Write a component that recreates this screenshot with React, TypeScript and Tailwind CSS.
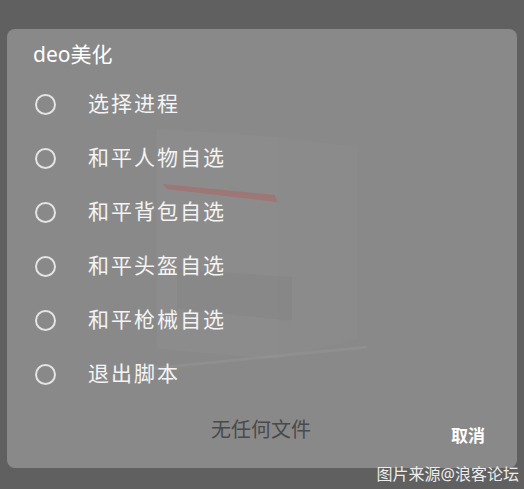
const options = [
  "选择进程",
  "和平人物自选",
  "和平背包自选",
  "和平头盔自选",
  "和平枪械自选",
  "退出脚本",
];

const cjk = { fontFamily: '"Noto Sans", "Noto Sans CJK SC", sans-serif' };

function Backdrop() {
  // faint picture that shows through the dialog
  return (
    <svg
      className="pointer-events-none absolute inset-0"
      width="510"
      height="439"
      viewBox="0 0 510 439"
    >
      <polygon points="150,100 270,108 270,330 150,320" fill="#ffffff" opacity="0.03" />
      <polygon points="270,108 350,118 350,310 270,330" fill="#ffffff" opacity="0.02" />
      <polygon points="156,155 268,166 270,173 160,160" fill="#b06060" opacity="0.5" />
      <polygon points="170,240 285,248 285,292 170,280" fill="#000000" opacity="0.025" />
      <line x1="140" y1="340" x2="360" y2="318" stroke="#ffffff" strokeOpacity="0.05" strokeWidth="3" />
    </svg>
  );
}

export default function App() {
  return (
    <div className="relative h-[489px] w-[524px] overflow-hidden bg-[#606060] px-[7px] pt-[29px]" style={cjk}>
      <div className="relative flex h-[439px] flex-col rounded-lg bg-[#898989]">
        <Backdrop />
        <h1 className="relative pl-[26px] pt-[11px] text-[21px] leading-[28px] text-white">deo美化</h1>

        <ul className="relative mt-[9px] flex flex-col">
          {options.map((o) => (
            <li key={o} className="flex h-[54px] items-center">
              <span className="ml-[28px] h-[21px] w-[21px] rounded-full border-2 border-[#e4e4e4]" />
              <span className="ml-[32px] text-[21px] tracking-[2px] text-[#f4f4f4]">{o}</span>
            </li>
          ))}
        </ul>

        <div className="relative flex flex-1 items-start">
          <span className="mt-[14px] flex-1 pl-[64px] text-center text-[20px] text-[#4a4a4a]">无任何文件</span>
          <span className="mr-[32px] mt-[22px] text-[17px] font-bold text-white">取消</span>
        </div>
      </div>

      <span className="absolute bottom-[4px] right-[5px] text-[16px] leading-[22px] text-[#ececec]">图片来源@浪客论坛</span>
    </div>
  );
}
